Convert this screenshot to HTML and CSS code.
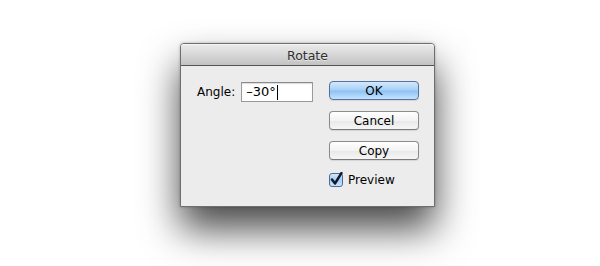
FILE: index.html
```html
<!DOCTYPE html>
<html>
<head>
<meta charset="utf-8">
<link rel="stylesheet" href="styles.css">
</head>
<body>
<div class="stage">
  <div class="window">
    <div class="titlebar">Rotate</div>
    <div class="content">
      <div class="field">
        <span class="label">Angle:</span>
        <div class="input">–30°<span class="caret"></span></div>
      </div>
      <div class="actions">
        <button class="btn primary">OK</button>
        <button class="btn">Cancel</button>
        <button class="btn">Copy</button>
        <label class="check">
          <svg class="box" width="15" height="15" viewBox="0 0 15 15">
            <defs>
              <linearGradient id="cb" x1="0" y1="0" x2="0" y2="1">
                <stop offset="0" stop-color="#d6e8fb"/>
                <stop offset="0.5" stop-color="#a9cdf3"/>
                <stop offset="1" stop-color="#cfe6fd"/>
              </linearGradient>
            </defs>
            <rect x="0.5" y="1.5" width="13" height="13" rx="2.5" fill="url(#cb)" stroke="#4d6b93"/>
            <path d="M3 7.5 L6 11.5 L12.5 1" fill="none" stroke="#111a33" stroke-width="2.4" stroke-linecap="round" stroke-linejoin="round"/>
          </svg>
          <span>Preview</span>
        </label>
      </div>
    </div>
  </div>
</div>
</body>
</html>
```
FILE: styles.css
```css
html, body {
  margin: 0;
  padding: 0;
  background: #ffffff;
}
body {
  width: 600px;
  height: 266px;
  overflow: hidden;
  font-family: "DejaVu Sans", sans-serif;
  font-size: 12px;
  color: #000;
}
.stage {
  padding: 43px 0 0 180px;
}
.window {
  width: 253px;
  height: 162px;
  border: 1px solid #6e6e6e;
  border-radius: 4px 4px 0 0;
  background: #ececec;
  box-shadow: 0 22px 38px rgba(0,0,0,0.72), 0 0 3px rgba(0,0,0,0.25);
  display: flex;
  flex-direction: column;
}
.titlebar {
  height: 20px;
  line-height: 21px;
  text-align: center;
  font-size: 12.5px;
  color: #2f2f2f;
  text-shadow: 0 1px 0 rgba(255,255,255,0.5);
  background: linear-gradient(#e9e9e9, #c3c3c3);
  border-bottom: 1px solid #545454;
  border-top: 1px solid #f6f6f6;
  border-radius: 3px 3px 0 0;
}
.content {
  flex: 1;
  display: flex;
  justify-content: space-between;
  padding: 15px 15px 0 16px;
}
.field {
  display: flex;
  align-items: center;
  height: 20px;
  margin-top: 1px;
}
.label {
  margin-right: 6px;
}
.input {
  width: 66px;
  height: 18px;
  line-height: 18px;
  padding-left: 4px;
  font-size: 13px;
  background: #fff;
  border: 1px solid #9a9a9a;
  border-top-color: #8a8a8a;
  box-shadow: inset 0 1px 1px rgba(0,0,0,0.15);
  display: flex;
  align-items: center;
}
.caret {
  display: inline-block;
  width: 1px;
  height: 15px;
  background: #000;
  margin-left: 1px;
}
.actions {
  display: flex;
  flex-direction: column;
  width: 90px;
  gap: 11px;
}
.btn {
  height: 19px;
  width: 90px;
  padding: 0;
  font-family: "DejaVu Sans", sans-serif;
  font-size: 12px;
  color: #000;
  border: 1px solid #8c8c8c;
  border-bottom-color: #7a7a7a;
  border-radius: 4px;
  background: linear-gradient(#ffffff, #f3f3f3 50%, #e8e8e8 51%, #f6f6f6);
  box-shadow: 0 1px 1px rgba(0,0,0,0.1);
}
.btn.primary {
  border-color: #54729c;
  background: linear-gradient(#d3e8fd, #a6cff6 48%, #8dc1f3 52%, #c5e3fe);
}
.check {
  display: flex;
  align-items: center;
  gap: 4px;
  margin-top: 1px;
}
.box {
  display: block;
}
```
